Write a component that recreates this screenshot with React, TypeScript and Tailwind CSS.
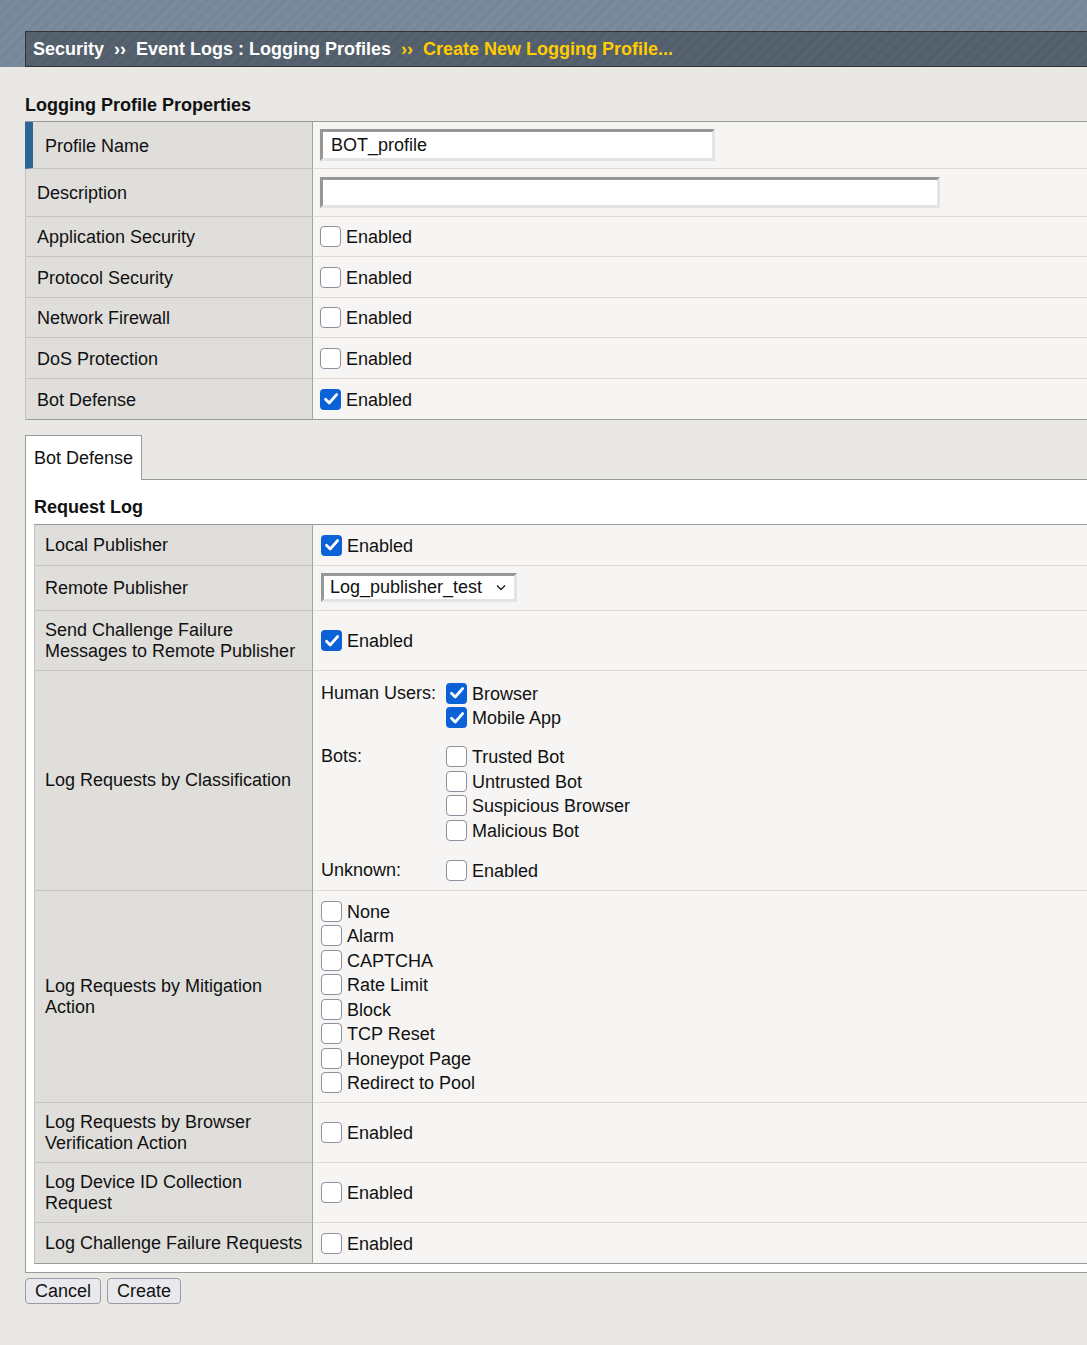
import React from 'react';

type CheckProps = { checked?: boolean };

function Box({ checked }: CheckProps) {
  if (checked) {
    return (
      <span className="w-[21px] h-[21px] shrink-0 rounded-[4px] bg-[#0b62d6] flex items-center justify-center">
        <svg width="16" height="16" viewBox="0 0 16 16" fill="none">
          <path d="M2.5 8.3 L6.2 12 L13.6 3.6" stroke="white" strokeWidth="2.8" strokeLinecap="round" strokeLinejoin="round" />
        </svg>
      </span>
    );
  }
  return <span className="w-[21px] h-[21px] shrink-0 rounded-[4px] border border-[#8f8f9d] bg-white" />;
}

function Check({ checked, label = 'Enabled', h = 'h-[24.5px]' }: { checked?: boolean; label?: string; h?: string }) {
  return (
    <div className={`flex items-center gap-[5px] ${h}`}>
      <Box checked={checked} />
      <span className="pt-[2px] leading-[21px]">{label}</span>
    </div>
  );
}

type RowProps = {
  label: React.ReactNode;
  children?: React.ReactNode;
  h: string;
  wide?: boolean;
  blue?: boolean;
  last?: boolean;
  valueClass?: string;
};

function Row({ label, children, h, wide, blue, last, valueClass }: RowProps) {
  const labelW = wide ? 'w-[288px] pl-[11px] pt-[3px]' : 'w-[279px] pl-[10px] pt-[1px]';
  const edge = blue ? 'border-l-[8px] border-l-[#2f6496] !pl-[12px]' : 'border-l border-l-[#c3c2be]';
  const bottomL = last ? 'border-b-[#9a9a9a]' : 'border-b-[#c6c5c1]';
  const bottomR = last ? 'border-b-[#9a9a9a]' : 'border-b-[#dcdbd7]';
  return (
    <div className={`flex ${h}`}>
      <div
        className={`${labelW} ${edge} shrink-0 bg-[#dfdedb] border-r border-r-[#a3a3a3] border-b ${bottomL} flex items-center pr-[6px] leading-[21.5px]`}
      >
        {label}
      </div>
      <div className={`flex-1 bg-[#f6f5f3] border-b ${bottomR} flex ${valueClass ?? 'items-center'}`}>
        {children}
      </div>
    </div>
  );
}

const inset =
  'border-[3px] border-t-[#979797] border-l-[#979797] border-b-[#e4e4e4] border-r-[#e4e4e4] bg-white';

function Group({ title, items, className = '' }: { title: string; items: { label: string; checked?: boolean }[]; className?: string }) {
  return (
    <div className={`flex ${className}`}>
      <div className="w-[125px] shrink-0 h-[24.5px] flex items-center">{title}</div>
      <div className="flex flex-col">
        {items.map((it) => (
          <Check key={it.label} label={it.label} checked={it.checked} />
        ))}
      </div>
    </div>
  );
}

export default function App() {
  const mitigation = ['None', 'Alarm', 'CAPTCHA', 'Rate Limit', 'Block', 'TCP Reset', 'Honeypot Page', 'Redirect to Pool'];

  return (
    <div className="min-h-[1345px] w-full overflow-hidden bg-[#e9e8e4] font-['Liberation_Sans',Arial,sans-serif] text-[18px] text-[#111]">
      {/* header */}
      <div className="h-[67px] pt-[31px] bg-[repeating-linear-gradient(135deg,#76879a_0px,#76879a_4px,#7a8b9d_4px,#7a8b9d_8px)]">
        <div className="ml-[25px] h-[36px] border-y border-l border-[#333] bg-[repeating-linear-gradient(135deg,#525e6b_0px,#525e6b_4px,#56626e_4px,#56626e_8px)] flex items-center pl-[7px] font-bold whitespace-nowrap">
          <span className="text-white">Security</span>
          <span className="text-white mx-[10px]">››</span>
          <span className="text-white">Event Logs : Logging Profiles</span>
          <span className="text-[#ffcc00] mx-[10px]">››</span>
          <span className="text-[#ffcc00]">Create New Logging Profile...</span>
        </div>
      </div>

      <div className="pl-[25px]">
        <h2 className="font-bold mt-[28px] mb-[5px] leading-[21px]">Logging Profile Properties</h2>

        <div className="border-t border-[#9a9a9a]">
          <Row wide blue h="h-[47px]" label="Profile Name" valueClass="items-start pt-[7px]">
            <div className={`${inset} ml-[7px] w-[395px] h-[32px] flex items-center pl-[8px] pt-[1px]`}>BOT_profile</div>
          </Row>
          <Row wide h="h-[48px]" label="Description" valueClass="items-start pt-[8px]">
            <div className={`${inset} ml-[7px] w-[620px] h-[31px]`} />
          </Row>
          <Row wide h="h-[40px]" label="Application Security">
            <div className="pl-[7px]"><Check /></div>
          </Row>
          <Row wide h="h-[41px]" label="Protocol Security">
            <div className="pl-[7px]"><Check /></div>
          </Row>
          <Row wide h="h-[40px]" label="Network Firewall">
            <div className="pl-[7px]"><Check /></div>
          </Row>
          <Row wide h="h-[41px]" label="DoS Protection">
            <div className="pl-[7px]"><Check /></div>
          </Row>
          <Row wide last h="h-[41px]" label="Bot Defense">
            <div className="pl-[7px]"><Check checked /></div>
          </Row>
        </div>

        {/* tabs */}
        <div className="flex items-end mt-[15px]">
          <div className="h-[45px] bg-white border-t border-l border-r border-[#9a9a9a] flex items-center px-[8px] pt-[1px] leading-[21px]">
            Bot Defense
          </div>
          <div className="flex-1 border-b border-[#9a9a9a]" />
        </div>

        <div className="bg-white border-l border-b border-[#9a9a9a] pl-[8px] pt-[17px] pb-[8px]">
          <h3 className="font-bold leading-[21px] mb-[6px]">Request Log</h3>

          <div className="border-t border-[#9a9a9a]">
            <Row h="h-[41px]" label="Local Publisher">
              <div className="pl-[8px]"><Check checked /></div>
            </Row>
            <Row h="h-[45px]" label="Remote Publisher" valueClass="items-start pt-[7px]">
              <div className={`${inset} ml-[8px] w-[196px] h-[29px] flex items-center pl-[6px] pr-[8px] justify-between`}>
                <span>Log_publisher_test</span>
                <svg width="10" height="7" viewBox="0 0 10 7" fill="none">
                  <path d="M1 1.5 L5 5.5 L9 1.5" stroke="#222" strokeWidth="1.4" />
                </svg>
              </div>
            </Row>
            <Row
              h="h-[60px]"
              label={
                <span>
                  Send Challenge Failure
                  <br />
                  Messages to Remote Publisher
                </span>
              }
            >
              <div className="pl-[8px]"><Check checked /></div>
            </Row>
            <Row h="h-[220px]" label="Log Requests by Classification" valueClass="flex-col pt-[10px] pl-[8px]">
              <Group
                title="Human Users:"
                items={[
                  { label: 'Browser', checked: true },
                  { label: 'Mobile App', checked: true },
                ]}
              />
              <Group
                title="Bots:"
                className="mt-[14.5px]"
                items={[
                  { label: 'Trusted Bot' },
                  { label: 'Untrusted Bot' },
                  { label: 'Suspicious Browser' },
                  { label: 'Malicious Bot' },
                ]}
              />
              <Group title="Unknown:" className="mt-[15.5px]" items={[{ label: 'Enabled' }]} />
            </Row>
            <Row
              h="h-[212px]"
              label={
                <span>
                  Log Requests by Mitigation
                  <br />
                  Action
                </span>
              }
              valueClass="flex-col justify-center pl-[8px] pt-[1px]"
            >
              {mitigation.map((m) => (
                <Check key={m} label={m} />
              ))}
            </Row>
            <Row
              h="h-[60px]"
              label={
                <span>
                  Log Requests by Browser
                  <br />
                  Verification Action
                </span>
              }
            >
              <div className="pl-[8px]"><Check /></div>
            </Row>
            <Row
              h="h-[60px]"
              label={
                <span>
                  Log Device ID Collection
                  <br />
                  Request
                </span>
              }
            >
              <div className="pl-[8px]"><Check /></div>
            </Row>
            <Row last h="h-[41px]" label={<span className="whitespace-nowrap">Log Challenge Failure Requests</span>}>
              <div className="pl-[8px]"><Check /></div>
            </Row>
          </div>
        </div>

        <div className="flex gap-[6px] mt-[5px]">
          <button type="button" className="h-[26px] px-[9px] bg-[#e9e9ed] border border-[#9a9aa6] rounded-[4px] leading-[21px]">
            Cancel
          </button>
          <button type="button" className="h-[26px] px-[9px] bg-[#e9e9ed] border border-[#9a9aa6] rounded-[4px] leading-[21px]">
            Create
          </button>
        </div>
      </div>
    </div>
  );
}
